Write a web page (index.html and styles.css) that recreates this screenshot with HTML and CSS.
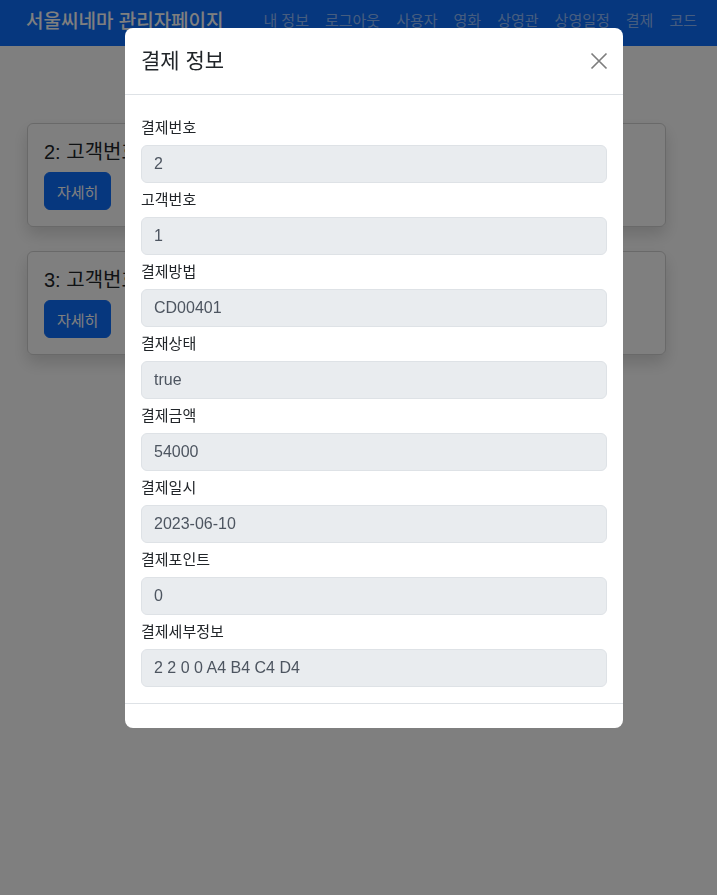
FILE: index.html
```html
<!DOCTYPE html>
<html lang="ko">
<head>
<meta charset="utf-8">
<title>서울씨네마 관리자페이지</title>
<link rel="stylesheet" href="styles.css">
</head>
<body class="modal-open">
<nav class="navbar">
  <span class="brand">서울씨네마 관리자페이지</span>
  <ul class="nav">
    <li>내 정보</li>
    <li>로그아웃</li>
    <li>사용자</li>
    <li>영화</li>
    <li>상영관</li>
    <li>상영일정</li>
    <li>결제</li>
    <li>코드</li>
  </ul>
</nav>
<main class="content">
  <div class="card">
    <div class="card-title">2: 고객번호 1</div>
    <button class="btn">자세히</button>
  </div>
  <div class="card">
    <div class="card-title">3: 고객번호 1</div>
    <button class="btn">자세히</button>
  </div>
</main>
<div class="backdrop"></div>
<div class="modal">
  <div class="modal-content">
    <div class="modal-header">
      <h5 class="modal-title">결제 정보</h5>
      <button class="btn-close" aria-label="Close">
        <svg width="18" height="18" viewBox="0 0 18 18"><path d="M1.5 1.5L16.5 16.5M16.5 1.5L1.5 16.5" stroke="#000" stroke-width="1.7" fill="none"/></svg>
      </button>
    </div>
    <div class="modal-body">
      <div class="group"><label>결제번호</label><div class="input">2</div></div>
      <div class="group"><label>고객번호</label><div class="input">1</div></div>
      <div class="group"><label>결제방법</label><div class="input">CD00401</div></div>
      <div class="group"><label>결재상태</label><div class="input">true</div></div>
      <div class="group"><label>결제금액</label><div class="input">54000</div></div>
      <div class="group"><label>결제일시</label><div class="input">2023-06-10</div></div>
      <div class="group"><label>결제포인트</label><div class="input">0</div></div>
      <div class="group"><label>결제세부정보</label><div class="input">2 2 0 0 A4 B4 C4 D4</div></div>
    </div>
    <div class="modal-footer"></div>
  </div>
</div>
</body>
</html>
```
FILE: styles.css
```css
* { box-sizing: border-box; }
html, body {
  margin: 0;
  height: 100%;
}
body {
  font-family: "Liberation Sans", "Noto Sans CJK KR", sans-serif;
  font-size: 16px;
  line-height: 1.5;
  color: #212529;
  background: #fff;
}
.navbar {
  height: 46px;
  background: #0d6efd;
  display: flex;
  align-items: center;
  justify-content: space-between;
  padding: 0 12px 0 26px;
}
.brand {
  color: #fff;
  font-size: 19px;
  font-weight: 500;
  line-height: 1;
  margin-top: -4px;
}
.nav {
  list-style: none;
  margin: 0;
  padding: 0;
  display: flex;
  margin-top: -4px;
}
.nav li {
  color: rgba(255,255,255,.55);
  font-size: 15px;
  padding: 0 8px;
}
.content {
  padding: 77px 51px 0 27px;
  display: flex;
  flex-direction: column;
  gap: 24px;
}
.card {
  border: 1px solid rgba(0,0,0,.175);
  border-radius: 6px;
  padding: 16px;
  height: 104px;
  box-shadow: 0 .5rem 1rem rgba(0,0,0,.15);
}
.card-title {
  font-size: 20px;
  line-height: 24px;
  margin-bottom: 8px;
}
.btn {
  font-family: inherit;
  background: #0d6efd;
  color: #fff;
  border: 1px solid #0d6efd;
  border-radius: 6px;
  font-size: 15px;
  height: 38px;
  padding: 0 12px;
}
.backdrop {
  position: fixed;
  top: 0;
  left: 0;
  width: 100vw;
  height: 100vh;
  z-index: 1040;
  background-color: #000;
  opacity: .5;
}
.modal {
  position: absolute;
  z-index: 1050;
  top: 28px;
  left: 125px;
  width: 498px;
}
.modal-content {
  background: #fff;
  border-radius: 8px;
  overflow: hidden;
}
.modal-header {
  height: 67px;
  border-bottom: 1px solid #dee2e6;
  display: flex;
  align-items: center;
  justify-content: space-between;
  padding: 0 16px;
}
.modal-title {
  margin: 0;
  font-size: 21px;
  font-weight: 400;
  line-height: 1;
  margin-top: -1px;
}
.btn-close {
  background: none;
  border: 0;
  padding: 0;
  opacity: .5;
  width: 18px;
  height: 18px;
  margin-right: -1px;
  display: flex;
}
.modal-body {
  padding: 16px;
}
.group {
  padding-top: 5px;
}
.group label {
  display: block;
  line-height: 24px;
  margin-bottom: 5px;
  font-size: 15px;
}
.input {
  height: 38px;
  background: #e9ecef;
  border: 1px solid #dee2e6;
  border-radius: 6px;
  padding: 0 12px;
  line-height: 36px;
  color: #4d5560;
}
.modal-footer {
  height: 25px;
  border-top: 1px solid #dee2e6;
}
```
